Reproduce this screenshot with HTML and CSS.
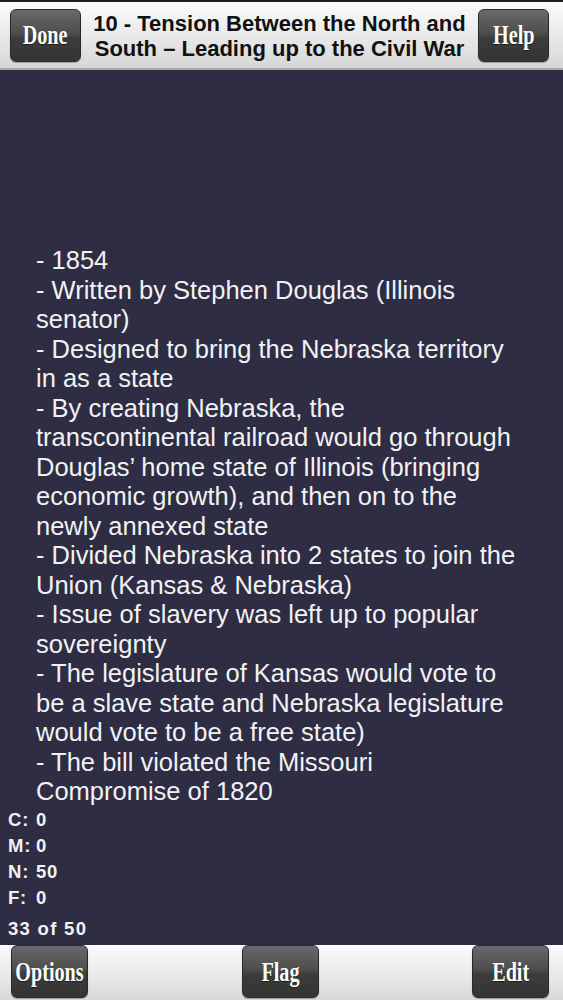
FILE: index.html
```html
<!DOCTYPE html>
<html>
<head>
<meta charset="utf-8">
<link rel="stylesheet" href="styles.css">
</head>
<body>
<div class="screen">
  <header class="topbar">
    <button class="btn"><span>Done</span></button>
    <div class="title">10 - Tension Between the North and<br>South – Leading up to the Civil War</div>
    <button class="btn"><span>Help</span></button>
  </header>
  <main class="content">
    <div class="card-text">- 1854<br>- Written by Stephen Douglas (Illinois senator)<br>- Designed to bring the Nebraska territory in as a state<br>- By creating Nebraska, the transcontinental railroad would go through Douglas’ home state of Illinois (bringing economic growth), and then on to the newly annexed state<br>- Divided Nebraska into 2 states to join the Union (Kansas &amp; Nebraska)<br>- Issue of slavery was left up to popular sovereignty<br>- The legislature of Kansas would vote to be a slave state and Nebraska legislature would vote to be a free state)<br>- The bill violated the Missouri Compromise of 1820</div>
    <div class="stats">
      <span>C:</span><span>0</span>
      <span>M:</span><span>0</span>
      <span>N:</span><span>50</span>
      <span>F:</span><span>0</span>
      <span class="count">33 of 50</span>
    </div>
  </main>
  <footer class="bottombar">
    <button class="btn"><span>Options</span></button>
    <button class="btn"><span>Flag</span></button>
    <button class="btn"><span>Edit</span></button>
  </footer>
</div>
</body>
</html>
```
FILE: styles.css
```css
html, body {
  margin: 0;
  padding: 0;
}
body {
  background: #1c1c22;
}
.screen {
  width: 563px;
  height: 1000px;
  display: flex;
  flex-direction: column;
  overflow: hidden;
}
.topbar {
  margin-top: 2px;
  height: 68px;
  flex: 0 0 auto;
  display: flex;
  align-items: center;
  justify-content: space-between;
  padding: 0 14px 0 10px;
  background: linear-gradient(#fbfbfb, #e6e6e6 60%, #d6d6d6);
  border-bottom: 2px solid #a9a9ae;
  box-sizing: border-box;
}
.btn {
  width: 71px;
  height: 53px;
  border: 1px solid #2a2a2a;
  border-radius: 6px;
  background: linear-gradient(#6a6a6a, #4e4e4e 45%, #3c3c3c 55%, #343434);
  color: #fff;
  font-family: "Liberation Serif", serif;
  font-weight: bold;
  font-size: 28px;
  padding: 0;
  display: flex;
  align-items: center;
  justify-content: center;
  box-shadow: 0 1px 1px rgba(0,0,0,0.25);
}
.btn span {
  display: inline-block;
  transform: scaleX(0.72);
  text-shadow: 0 1px 1px rgba(0,0,0,0.5);
}
.title {
  flex: 1;
  text-align: center;
  font-family: "Liberation Sans", Arial, sans-serif;
  font-weight: bold;
  font-size: 22px;
  line-height: 25px;
  color: #111;
  padding-top: 2px;
}
.content {
  flex: 1;
  background: #2e2d44;
  padding: 176px 45px 0 36px;
  box-sizing: border-box;
  color: #f2f2f4;
}
.card-text {
  font-family: "Liberation Sans", Arial, sans-serif;
  font-size: 25.5px;
  line-height: 29.5px;
}
.stats {
  margin-left: -28px;
  display: grid;
  grid-template-columns: 28px auto;
  justify-content: start;
  font-family: "Liberation Sans", Arial, sans-serif;
  font-weight: bold;
  font-size: 18.5px;
  line-height: 26.3px;
  letter-spacing: 0.8px;
}
.stats .count {
  grid-column: 1 / span 2;
  margin-top: 4px;
  letter-spacing: 1.3px;
}
.bottombar {
  height: 55px;
  flex: 0 0 auto;
  display: flex;
  align-items: flex-end;
  justify-content: space-between;
  padding: 0 14px 2px 11px;
  background: linear-gradient(#fbfbfb, #e8e8e8 60%, #d8d8d8);
  box-sizing: border-box;
}
.bottombar .btn {
  height: 53px;
  width: 77px;
}
```
